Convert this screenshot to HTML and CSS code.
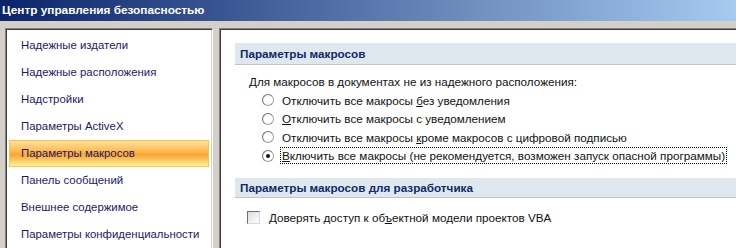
FILE: index.html
```html
<!DOCTYPE html>
<html>
  <head>
    <meta charset="utf-8" />
    <link rel="stylesheet" href="styles.css">
    <title>Центр управления безопасностью</title>
  </head>
  <body>
    <div class="window">
      <div class="titlebar">Центр управления безопасностью</div>
      <div class="main">
        <!-- navigation list on the left -->
        <div class="nav sunken">
          <div class="navItem">Надежные издатели</div>
          <div class="navItem">Надежные расположения</div>
          <div class="navItem">Надстройки</div>
          <div class="navItem">Параметры ActiveX</div>
          <div class="navItem selected">Параметры макросов</div>
          <div class="navItem">Панель сообщений</div>
          <div class="navItem">Внешнее содержимое</div>
          <div class="navItem">Параметры конфиденциальности</div>
        </div>

        <!-- settings page -->
        <div class="content sunken">
          <div class="sectionTitle">Параметры макросов</div>
          <div class="intro">Для макросов в документах не из надежного расположения:</div>
          <div class="option"><span class="radio"></span><span class="label">Отключить все макросы <u>б</u>ез уведомления</span></div>
          <div class="option"><span class="radio"></span><span class="label"><u>О</u>тключить все макросы с уведомлением</span></div>
          <div class="option"><span class="radio"></span><span class="label">Отключить все макросы <u>к</u>роме макросов с цифровой подписью</span></div>
          <div class="option"><span class="radio checked"></span><span class="label focused"><u>В</u>ключить все макросы (не рекомендуется, возможен запуск опасной программы)</span></div>

          <div class="sectionTitle second">Параметры макросов для разработчика</div>
          <div class="option check"><span class="checkbox"></span><span class="label">Доверять доступ к об<u>ъ</u>ектной модели проектов VBA</span></div>
        </div>
      </div>
    </div>
  </body>
</html>
```

FILE: styles.css
```css
body {
  margin: 0;
  font-family: "Liberation Sans", Arial, sans-serif;
  font-size: 11.7px;
  overflow: hidden;
}

.window {
  background-color: #d4d0c8;
  height: 248px;
  width: 736px;
  overflow: hidden;
}

.titlebar {
  height: 21px;
  line-height: 21px;
  padding-left: 2px;
  color: white;
  font-weight: bold;
  font-size: 11.8px;
  background: linear-gradient(to right, #0a246a, #a6caf0);
}

.main {
  display: flex;
  gap: 6px;
  padding: 7px 0 0 5px;
  height: 240px;
}

.sunken {
  background-color: white;
  border: 1px solid;
  border-color: #808080 #ffffff #ffffff #808080;
  box-shadow: inset 1px 1px #404040, inset -1px -1px #d4d0c8;
}

.nav {
  width: 208px;
  flex-shrink: 0;
  padding: 3px 3px 0 2px;
  box-sizing: border-box;
  font-size: 11.4px;
}

.navItem {
  height: 27px;
  line-height: 27px;
  padding-left: 13px;
  color: #1d1868;
}

.navItem.selected {
  margin-left: 1px;
  padding-left: 11px;
  border: 1px solid #f7c548;
  height: 25px;
  line-height: 25px;
  background: linear-gradient(to bottom, #ffe0a0 0%, #fdc158 35%, #fba536 55%, #fdd068 80%, #fff0a4 100%);
}

.content {
  width: 600px;
  flex-shrink: 0;
  padding: 14px 0 0 15px;
  color: #111111;
}

.sectionTitle {
  height: 21px;
  line-height: 21px;
  padding-left: 5px;
  background-color: #dfe8ef;
  border-bottom: 1px solid #c3c3c3;
  color: #0f2a6a;
  font-weight: bold;
}

.sectionTitle.second {
  margin-top: 13px;
  height: 19px;
  line-height: 19px;
}

.intro {
  margin-top: 8px;
  padding-left: 14px;
  height: 18px;
  line-height: 18px;
}

.option {
  display: flex;
  align-items: center;
  height: 18.5px;
  padding-left: 27px;
}

.option.check {
  margin-top: 10px;
  padding-left: 12px;
}

.radio {
  width: 10px;
  height: 10px;
  border-radius: 50%;
  border: 1px solid #a0a0a0;
  border-top-color: #707070;
  border-left-color: #707070;
  background: radial-gradient(circle at 60% 60%, #ffffff 50%, #e2e2e2 100%);
  margin-right: 6px;
  position: relative;
}

.radio.checked::after {
  content: "";
  position: absolute;
  left: 3px;
  top: 3px;
  width: 4px;
  height: 4px;
  border-radius: 50%;
  background-color: #111111;
}

.checkbox {
  width: 11px;
  height: 11px;
  border: 1px solid;
  border-color: #6f6f6f #d8d8d8 #d8d8d8 #6f6f6f;
  background: linear-gradient(135deg, #dcdcdc, #ffffff);
  margin-right: 7px;
}

.label {
  padding: 0 1px;
  line-height: 15px;
  border: 1px dotted transparent;
}

.label.focused {
  border-color: #000000;
}
```
